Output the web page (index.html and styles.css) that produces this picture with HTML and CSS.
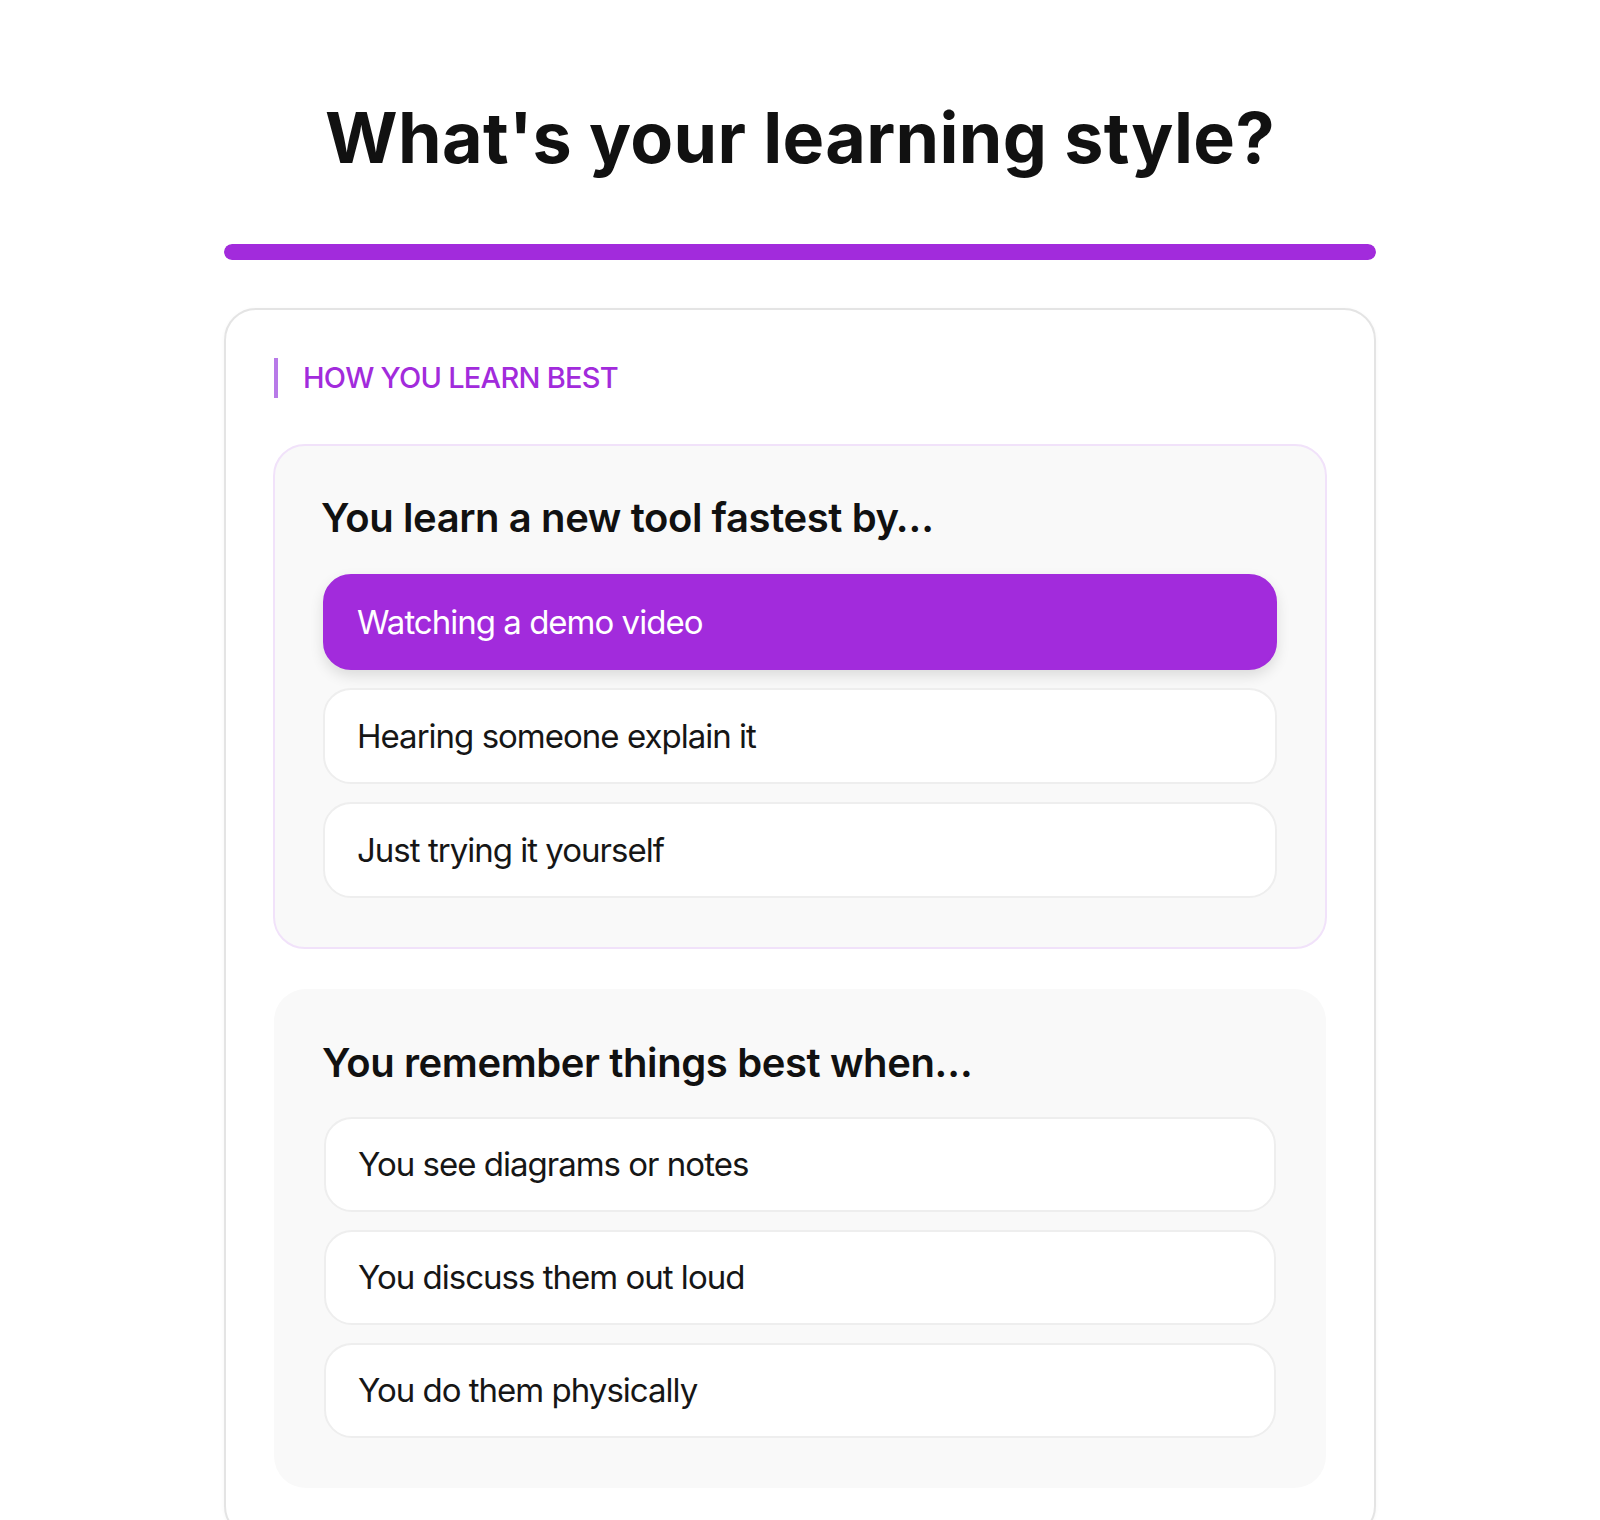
FILE: index.html
```html
<!DOCTYPE html>
<html lang="en">
  <head>
    <meta charset="UTF-8" />
    <meta name="viewport" content="width=device-width, initial-scale=1.0" />
    <title>Learning Style Quiz</title>
    <link rel="stylesheet" href="styles.css">
  </head>
  <body>
    <main class="quiz">
      <h1 class="quiz-title">What's your learning style?</h1>

      <div class="progress">
        <div class="progress-fill" style="width: 100%"></div>
      </div>

      <section class="panel">
        <h2 class="section-label">HOW YOU LEARN BEST</h2>

        <div class="question question-active">
          <h3 class="question-text">You learn a new tool fastest by…</h3>
          <div class="options">
            <button class="option selected">Watching a demo video</button>
            <button class="option">Hearing someone explain it</button>
            <button class="option">Just trying it yourself</button>
          </div>
        </div>

        <div class="question">
          <h3 class="question-text">You remember things best when…</h3>
          <div class="options">
            <button class="option">You see diagrams or notes</button>
            <button class="option">You discuss them out loud</button>
            <button class="option">You do them physically</button>
          </div>
        </div>
      </section>
    </main>
  </body>
</html>
```

FILE: styles.css
```css
body {
  margin: 0;
  font-family: Inter, "Noto Sans", Arial, sans-serif;
  background-color: #fff;
  color: #111;
}

.quiz {
  width: 1152px;
  margin: 0 auto;
  padding-top: 96px;
}

.quiz-title {
  margin: 0;
  font-size: 70px;
  line-height: 84px;
  font-weight: 700;
  letter-spacing: 0.005em;
  text-align: center;
  color: #111;
}

.progress {
  margin-top: 64px;
  height: 16px;
  border-radius: 8px;
  background-color: #eee;
  overflow: hidden;
}

.progress-fill {
  height: 100%;
  border-radius: 8px;
  background-color: #a22bdc;
}

.panel {
  margin-top: 48px;
  padding: 48px;
  border: 2px solid #e4e4e4;
  border-radius: 32px;
  background-color: #fff;
  box-shadow: 0 1px 4px rgba(0, 0, 0, 0.04);
}

.section-label {
  margin: 0 0 46px;
  padding-left: 25px;
  border-left: 4px solid #b87ae8;
  font-size: 29px;
  line-height: 40px;
  font-weight: 500;
  letter-spacing: -0.025em;
  color: #a22bdc;
}

.question {
  padding: 48px;
  border: 2px solid transparent;
  border-radius: 32px;
  background-color: #f9f9f9;
}

.question + .question {
  margin-top: 40px;
}

.question-active {
  margin: 0 -1px;
  padding-bottom: 49px;
  border-color: #f1e2fa;
}

.question-text {
  margin: 0 0 32px -2px;
  font-size: 40px;
  line-height: 48px;
  font-weight: 600;
  letter-spacing: -0.01em;
  color: #111;
}

.question + .question .question-text {
  margin-bottom: 30px;
}

.options {
  display: flex;
  flex-direction: column;
  gap: 18px;
}

.option {
  display: block;
  width: 100%;
  padding: 24px 32px;
  border: 2px solid #eee;
  border-radius: 28px;
  background-color: #fff;
  font-family: inherit;
  font-size: 33px;
  line-height: 44px;
  letter-spacing: -0.03em;
  text-align: left;
  color: #161616;
  cursor: pointer;
}

.question + .question .option {
  line-height: 43px;
}

.option.selected {
  border-color: #a22bdc;
  background-color: #a22bdc;
  color: #fff;
  box-shadow: 0 6px 14px rgba(0, 0, 0, 0.12);
}
```
